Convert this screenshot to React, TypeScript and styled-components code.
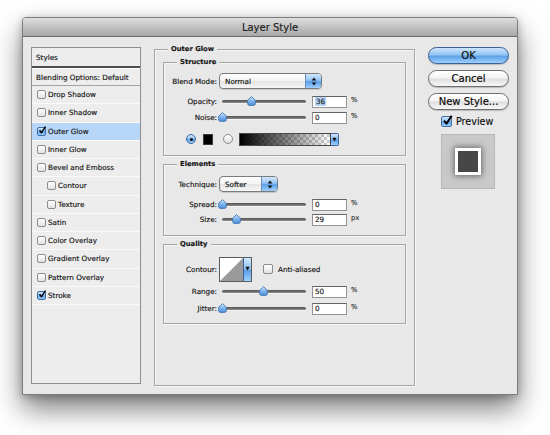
import React from 'react'
import styled, { createGlobalStyle, css } from 'styled-components'

const GlobalStyle = createGlobalStyle`
    html, body {
        margin: 0;
        padding: 0;
        background: #ffffff;
    }
    body {
        font-family: "DejaVu Sans", "Liberation Sans", sans-serif;
        color: #111111;
        -webkit-text-stroke: 0.15px currentColor;
    }
`

const STYLE_ITEMS = [
    { name: 'Drop Shadow', checked: false },
    { name: 'Inner Shadow', checked: false },
    { name: 'Outer Glow', checked: true, selected: true },
    { name: 'Inner Glow', checked: false },
    { name: 'Bevel and Emboss', checked: false },
    { name: 'Contour', checked: false, indent: true },
    { name: 'Texture', checked: false, indent: true },
    { name: 'Satin', checked: false },
    { name: 'Color Overlay', checked: false },
    { name: 'Gradient Overlay', checked: false },
    { name: 'Pattern Overlay', checked: false },
    { name: 'Stroke', checked: true },
]

const aquaBlue = css`
    background: linear-gradient(#d3e8fd 0%, #92c4f4 45%, #5b9fe6 55%, #9fd0ff 100%);
`

const CheckMark = () => (
    <CheckSvg viewBox="0 0 12 12">
        <path d="M2.2 6.2 L5 9.6 L10.8 0.8" fill="none" stroke="#000" strokeWidth="2.1" strokeLinejoin="round" />
    </CheckSvg>
)

const CheckBox = ({ checked, size = 9 }: { checked?: boolean; size?: number }) => (
    <Box $checked={checked} $size={size}>
        {checked && <CheckMark />}
    </Box>
)

const Thumb = () => (
    <svg width="9" height="10" viewBox="0 0 9 10">
        <defs>
            <linearGradient id="thumbFill" x1="0" y1="0" x2="0" y2="1">
                <stop offset="0" stopColor="#cfe6ff" />
                <stop offset="0.5" stopColor="#7fb5ef" />
                <stop offset="1" stopColor="#4a8ddc" />
            </linearGradient>
        </defs>
        <path
            d="M4.5 0.6 L8.4 4.2 V7.6 Q8.4 9.4 6.6 9.4 H2.4 Q0.6 9.4 0.6 7.6 V4.2 Z"
            fill="url(#thumbFill)"
            stroke="#3d6fa8"
            strokeWidth="0.8"
        />
    </svg>
)

const Slider = ({ value }: { value: number }) => (
    <SliderTrackArea>
        <Track />
        <ThumbHolder style={{ left: `${value * 80}px` }}>
            <Thumb />
        </ThumbHolder>
    </SliderTrackArea>
)

const UpDownArrows = () => (
    <svg width="6" height="9" viewBox="0 0 6 9">
        <path d="M3 0.6 L5.4 3.6 H0.6 Z" fill="#111" />
        <path d="M3 8.4 L5.4 5.4 H0.6 Z" fill="#111" />
    </svg>
)

const DownArrow = () => (
    <svg width="5" height="5" viewBox="0 0 5 5">
        <path d="M0.3 0.8 H4.7 L2.5 4.4 Z" fill="#111" />
    </svg>
)

const PopupSelect = ({ value, width }: { value: string; width: number }) => (
    <Select $w={width}>
        <SelectText>{value}</SelectText>
        <SelectArrows>
            <UpDownArrows />
        </SelectArrows>
    </Select>
)

type SliderFieldProps = {
    label: string
    value: string
    position: number
    unit: string
    mt: number
    highlighted?: boolean
}

const SliderField = ({ label, value, position, unit, mt, highlighted }: SliderFieldProps) => (
    <FieldRow $mt={mt} $h={13}>
        <FieldLabel>{label}</FieldLabel>
        <Slider value={position} />
        <NumberInput>{highlighted ? <Selected>{value}</Selected> : value}</NumberInput>
        <Unit>{unit}</Unit>
    </FieldRow>
)

export default function App() {
    return (
        <>
            <GlobalStyle />
            <Page>
                <Window>
                    <TitleBar>Layer Style</TitleBar>
                    <Body>
                        <StyleList>
                            <ListHeader>Styles</ListHeader>
                            <BlendRow>Blending Options: Default</BlendRow>
                            {STYLE_ITEMS.map((item) => (
                                <ListItem key={item.name} $selected={item.selected} $indent={item.indent}>
                                    <CheckBox checked={item.checked} />
                                    <ItemText>{item.name}</ItemText>
                                </ListItem>
                            ))}
                        </StyleList>

                        <Panel>
                            <Legend>Outer Glow</Legend>

                            <Group $pt={10} $pb={9}>
                                <Legend>Structure</Legend>
                                <FieldRow $mt={0} $h={16}>
                                    <FieldLabel>Blend Mode:</FieldLabel>
                                    <PopupSelect value="Normal" width={103} />
                                </FieldRow>
                                <SliderField label="Opacity:" value="36" position={0.36} unit="%" mt={6} highlighted />
                                <SliderField label="Noise:" value="0" position={0} unit="%" mt={3} />
                                <FieldRow $mt={8} $h={14} $pl={22}>
                                    <Radio $on />
                                    <Swatch />
                                    <Radio />
                                    <GradientBar>
                                        <GradientFill />
                                        <DropStrip>
                                            <DownArrow />
                                        </DropStrip>
                                    </GradientBar>
                                </FieldRow>
                            </Group>

                            <Group $pt={11} $pb={9}>
                                <Legend>Elements</Legend>
                                <FieldRow $mt={0} $h={16}>
                                    <FieldLabel>Technique:</FieldLabel>
                                    <PopupSelect value="Softer" width={59} />
                                </FieldRow>
                                <SliderField label="Spread:" value="0" position={0} unit="%" mt={6} />
                                <SliderField label="Size:" value="29" position={0.175} unit="px" mt={2} />
                            </Group>

                            <Group $pt={12} $pb={8}>
                                <Legend>Quality</Legend>
                                <FieldRow $mt={0} $h={25}>
                                    <FieldLabel>Contour:</FieldLabel>
                                    <ContourPicker>
                                        <ContourCurve viewBox="0 0 24 23" preserveAspectRatio="none">
                                            <path d="M0 23 L24 0 V23 Z" fill="#9a9a9a" />
                                        </ContourCurve>
                                        <ContourStrip>
                                            <DownArrow />
                                        </ContourStrip>
                                    </ContourPicker>
                                    <AntiAlias>
                                        <CheckBox size={10} />
                                        <span>Anti-aliased</span>
                                    </AntiAlias>
                                </FieldRow>
                                <SliderField label="Range:" value="50" position={0.51} unit="%" mt={3} />
                                <SliderField label="Jitter:" value="0" position={0} unit="%" mt={4} />
                            </Group>
                        </Panel>

                        <SideColumn>
                            <AquaButton $primary $mt={0}>OK</AquaButton>
                            <AquaButton $mt={6}>Cancel</AquaButton>
                            <AquaButton $mt={6}>New Style...</AquaButton>
                            <PreviewToggle>
                                <CheckBox checked size={11} />
                                <span>Preview</span>
                            </PreviewToggle>
                            <PreviewBox>
                                <PreviewTile>
                                    <PreviewFill />
                                </PreviewTile>
                            </PreviewBox>
                        </SideColumn>
                    </Body>
                </Window>
            </Page>
        </>
    )
}

const Page = styled.div`
    width: 550px;
    height: 435px;
    box-sizing: border-box;
    padding: 17px 0 0 22px;
    overflow: hidden;
`

const Window = styled.div`
    width: 496px;
    height: 378px;
    box-sizing: border-box;
    display: flex;
    flex-direction: column;
    border: 1px solid #7c7c7c;
    border-radius: 4px 4px 0 0;
    background: #e8e8e8;
    box-shadow: 0 14px 28px rgba(0, 0, 0, 0.5), 0 2px 8px rgba(0, 0, 0, 0.25);
`

const TitleBar = styled.div`
    height: 19px;
    box-sizing: border-box;
    flex: none;
    display: flex;
    align-items: center;
    justify-content: center;
    border-bottom: 1px solid #6c6c6c;
    border-radius: 3px 3px 0 0;
    background: linear-gradient(#dedede, #a7a7a7);
    font-size: 10px;
    color: #1c1c1c;
`

const Body = styled.div`
    flex: 1;
    display: flex;
    align-items: flex-start;
    padding: 10px 8px 0 8px;
`

const StyleList = styled.div`
    width: 110px;
    height: 337px;
    box-sizing: border-box;
    flex: none;
    display: flex;
    flex-direction: column;
    border: 1px solid #8e8e8e;
    background: #ededed;
    font-size: 7.2px;
    color: #141414;
`

const ListHeader = styled.div`
    height: 18px;
    flex: none;
    display: flex;
    align-items: center;
    padding-left: 4px;
    border-bottom: 2px solid #4d4d4d;
    box-shadow: 0 1px 0 #ffffff;
`

const BlendRow = styled.div`
    height: 18px;
    box-sizing: border-box;
    flex: none;
    display: flex;
    align-items: center;
    padding: 1px 0 0 4px;
    border-bottom: 1px solid #a2a2a2;
`

const ListItem = styled.div<{ $selected?: boolean; $indent?: boolean }>`
    height: 18.25px;
    box-sizing: border-box;
    flex: none;
    display: flex;
    align-items: center;
    gap: 2px;
    padding-left: ${({ $indent }) => ($indent ? 15 : 5)}px;
    border-bottom: 1px solid #fafafa;
    background: ${({ $selected }) => ($selected ? '#b8d6f8' : 'transparent')};
`

const ItemText = styled.span`
    white-space: nowrap;
`

const Box = styled.span<{ $checked?: boolean; $size: number }>`
    position: relative;
    flex: none;
    width: ${({ $size }) => $size}px;
    height: ${({ $size }) => $size}px;
    box-sizing: border-box;
    border: 1px solid ${({ $checked }) => ($checked ? '#3f6da3' : '#8d8d8d')};
    border-radius: 2px;
    ${({ $checked }) => ($checked ? aquaBlue : 'background: linear-gradient(#ffffff, #e2e2e2);')}
`

const CheckSvg = styled.svg`
    position: absolute;
    left: 0;
    top: -2px;
    width: 120%;
    height: 120%;
`

const Panel = styled.div`
    position: relative;
    flex: none;
    width: 261px;
    height: 337px;
    box-sizing: border-box;
    margin: 2px 0 0 13px;
    padding: 12px 8px;
    display: flex;
    flex-direction: column;
    gap: 8px;
    border: 1px solid #a4a4a4;
    box-shadow: 1px 1px 0 #f6f6f6, inset 1px 1px 0 #f6f6f6;
    font-size: 7.2px;
`

const Group = styled.div<{ $pt: number; $pb: number }>`
    position: relative;
    display: flex;
    flex-direction: column;
    padding: ${({ $pt }) => $pt}px 0 ${({ $pb }) => $pb}px;
    border: 1px solid #a4a4a4;
    box-shadow: 1px 1px 0 #f6f6f6, inset 1px 1px 0 #f6f6f6;
`

const Legend = styled.div`
    position: absolute;
    top: -5px;
    left: 13px;
    padding: 0 3px;
    background: #e8e8e8;
    font-size: 6.8px;
    line-height: 9px;
    font-weight: bold;
    color: #141414;
`

const FieldRow = styled.div<{ $mt: number; $h: number; $pl?: number }>`
    display: flex;
    align-items: center;
    height: ${({ $h }) => $h}px;
    margin-top: ${({ $mt }) => $mt}px;
    padding-left: ${({ $pl }) => $pl ?? 0}px;
`

const FieldLabel = styled.div`
    width: 53px;
    flex: none;
    text-align: right;
    white-space: nowrap;
    color: #141414;
`

const SliderTrackArea = styled.div`
    position: relative;
    flex: none;
    width: 88px;
    height: 13px;
    margin-left: 1px;
`

const Track = styled.div`
    position: absolute;
    left: 4px;
    right: 0;
    top: 5px;
    height: 3px;
    border-radius: 2px;
    background: linear-gradient(#4f4f4f, #8d8d8d);
    box-shadow: 0 1px 0 #f4f4f4;
`

const ThumbHolder = styled.div`
    position: absolute;
    top: 1px;
    width: 9px;
    height: 10px;
    display: flex;
`

const NumberInput = styled.div`
    flex: none;
    width: 35px;
    height: 12px;
    box-sizing: border-box;
    margin-left: 6px;
    padding-left: 2px;
    display: flex;
    align-items: center;
    border: 1px solid #939393;
    border-top-color: #646464;
    background: #ffffff;
    font-size: 7.2px;
    color: #1a1a1a;
`

const Selected = styled.span`
    background: #b4d3f7;
    padding: 0 1px;
`

const Unit = styled.span`
    align-self: flex-start;
    margin: 1px 0 0 4px;
    font-size: 6.8px;
    color: #333;
`

const Select = styled.div<{ $w: number }>`
    flex: none;
    width: ${({ $w }) => $w}px;
    height: 16px;
    box-sizing: border-box;
    margin-left: 2px;
    display: flex;
    border: 1px solid #7b7b7b;
    border-radius: 4px;
    background: linear-gradient(#ffffff 0%, #f3f3f3 50%, #e4e4e4 52%, #f6f6f6 100%);
    box-shadow: 0 1px 1px rgba(0, 0, 0, 0.15);
    overflow: hidden;
`

const SelectText = styled.div`
    flex: 1;
    display: flex;
    align-items: center;
    padding-left: 5px;
    font-size: 7.2px;
    color: #111;
`

const SelectArrows = styled.div`
    width: 15px;
    flex: none;
    display: flex;
    align-items: center;
    justify-content: center;
    border-left: 1px solid #6a8fc0;
    ${aquaBlue}
`

const Radio = styled.span<{ $on?: boolean }>`
    position: relative;
    flex: none;
    width: 10px;
    height: 10px;
    box-sizing: border-box;
    border-radius: 50%;
    margin-right: 7px;
    border: 1px solid ${({ $on }) => ($on ? '#3c6aa0' : '#8a8a8a')};
    ${({ $on }) =>
        $on
            ? css`
                  ${aquaBlue}
                  &::after {
                      content: '';
                      position: absolute;
                      left: 2.5px;
                      top: 2.5px;
                      width: 3px;
                      height: 3px;
                      border-radius: 50%;
                      background: #0a0a0a;
                  }
              `
            : 'background: linear-gradient(#ffffff, #e0e0e0);'}
`

const Swatch = styled.span`
    flex: none;
    width: 10px;
    height: 11px;
    margin-right: 10px;
    background: #000000;
    border: 1px solid #3a3a3a;
    box-sizing: border-box;
`

const GradientBar = styled.div`
    flex: none;
    display: flex;
    width: 100px;
    height: 13px;
    margin-left: -1px;
`

const GradientFill = styled.div`
    flex: 1;
    box-sizing: border-box;
    border: 1px solid #474747;
    background: linear-gradient(to right, #000000, rgba(0, 0, 0, 0)),
        conic-gradient(#cfcfcf 25%, #ffffff 0 50%, #cfcfcf 0 75%, #ffffff 0) 0 0 / 6px 6px;
`

const DropStrip = styled.div`
    width: 8px;
    flex: none;
    box-sizing: border-box;
    display: flex;
    align-items: center;
    justify-content: center;
    border: 1px solid #3d6599;
    border-left: none;
    border-radius: 0 2px 2px 0;
    ${aquaBlue}
`

const ContourPicker = styled.div`
    flex: none;
    width: 33px;
    height: 25px;
    box-sizing: border-box;
    margin-left: 2px;
    display: flex;
    border: 1px solid #5c5c5c;
    background: #ffffff;
`

const ContourCurve = styled.svg`
    flex: 1;
    height: 100%;
`

const ContourStrip = styled.div`
    width: 7px;
    flex: none;
    display: flex;
    align-items: flex-start;
    justify-content: center;
    padding-top: 8px;
    border-left: 1px solid #3d6599;
    ${aquaBlue}
`

const AntiAlias = styled.label`
    display: flex;
    align-items: center;
    gap: 5px;
    margin-left: 11px;
    margin-bottom: 1px;
    color: #141414;
`

const SideColumn = styled.div`
    flex: none;
    width: 81px;
    margin-left: 13px;
    display: flex;
    flex-direction: column;
`

const AquaButton = styled.button<{ $primary?: boolean; $mt: number }>`
    height: 17px;
    margin: ${({ $mt }) => $mt}px 0 0 0;
    padding: 0;
    border-radius: 9px;
    font-family: "DejaVu Sans", "Liberation Sans", sans-serif;
    font-size: 10px;
    line-height: 15px;
    color: #0c0c0c;
    -webkit-text-stroke: 0.2px currentColor;
    border: 1px solid ${({ $primary }) => ($primary ? '#3a5f90' : '#6e6e6e')};
    background: ${({ $primary }) =>
        $primary
            ? 'linear-gradient(#cde5fc 0%, #93c5f4 45%, #5ea1e7 55%, #9cd0ff 100%)'
            : 'linear-gradient(#ffffff 0%, #f4f4f4 48%, #dedede 52%, #f7f7f7 100%)'};
    box-shadow: 0 1px 1px rgba(0, 0, 0, 0.2);
`

const PreviewToggle = styled.label`
    display: flex;
    align-items: center;
    gap: 4px;
    height: 11px;
    margin: 6px 0 0 13px;
    font-size: 9.6px;
    color: #111;
`

const PreviewBox = styled.div`
    width: 54px;
    height: 55px;
    box-sizing: border-box;
    margin: 7px 0 0 13px;
    display: flex;
    align-items: center;
    justify-content: center;
    border: 1px solid #b7b7b7;
    background: #c9c9c9;
`

const PreviewTile = styled.div`
    width: 26px;
    height: 27px;
    box-sizing: border-box;
    padding: 3px;
    background: #ffffff;
    box-shadow: 0 0 6px 1px rgba(0, 0, 0, 0.5);
`

const PreviewFill = styled.div`
    width: 100%;
    height: 100%;
    background: #474747;
`
